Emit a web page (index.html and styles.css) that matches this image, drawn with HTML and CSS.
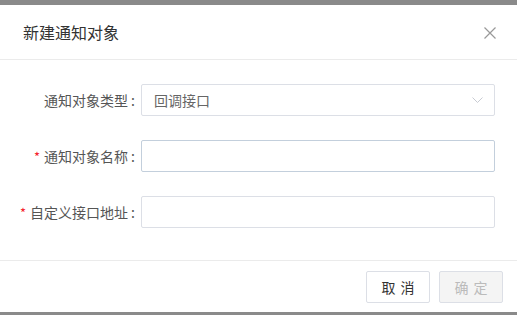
FILE: index.html
```html
<!DOCTYPE html>
<html lang="zh-CN">
<head>
    <meta charset="UTF-8">
    <title>新建通知对象</title>
    <link rel="stylesheet" href="styles.css">
</head>
<body>
    <div class="modal">
        <div class="modal-header">
            <span class="modal-title">新建通知对象</span>
            <svg class="close" width="12" height="12" viewBox="0 0 12 12">
                <path d="M0.5 0.5L11.5 11.5M11.5 0.5L0.5 11.5" stroke="#999" stroke-width="1.2" fill="none"/>
            </svg>
        </div>

        <div class="modal-body">
            <div class="form-row">
                <label class="form-label">通知对象类型<span class="colon">:</span></label>
                <div class="form-control select">
                    <span class="select-value">回调接口</span>
                    <svg class="arrow" width="11" height="6" viewBox="0 0 11 6">
                        <path d="M0.5 0.5L5.5 5.5L10.5 0.5" stroke="#c8cbd2" stroke-width="1" fill="none"/>
                    </svg>
                </div>
            </div>
            <div class="form-row">
                <label class="form-label"><i class="req">*</i>通知对象名称<span class="colon">:</span></label>
                <input class="form-control hover" type="text">
            </div>
            <div class="form-row">
                <label class="form-label"><i class="req">*</i>自定义接口地址<span class="colon">:</span></label>
                <input class="form-control" type="text">
            </div>
        </div>

        <div class="modal-footer">
            <button class="btn">取消</button>
            <button class="btn disabled">确定</button>
        </div>
    </div>
</body>
</html>
```

FILE: styles.css
```css
* {
    margin: 0;
    padding: 0;
    box-sizing: border-box;
}

body {
    font-family: "Noto Sans CJK SC", "Noto Sans", sans-serif;
    background: #8a8a8a;
    padding-top: 5px;
    height: 315px;
    overflow: hidden;
}

.modal {
    background: #fff;
    height: 307px;
    display: flex;
    flex-direction: column;
}

.modal-header {
    height: 55px;
    padding: 0 21px 0 23px;
    border-bottom: 1px solid #ebebeb;
    display: flex;
    align-items: center;
    justify-content: space-between;
}

.modal-title {
    font-size: 16px;
    color: #333;
    line-height: 1;
}

.close {
    margin-top: 1px;
}

.modal-body {
    height: 200px;
    padding: 24px 22px 0 0;
    display: flex;
    flex-direction: column;
    gap: 24px;
}

.form-row {
    display: flex;
    align-items: center;
    height: 32px;
}

.form-label {
    width: 141px;
    padding-right: 6px;
    text-align: right;
    font-size: 14px;
    color: #555;
    white-space: nowrap;
}

.colon {
    margin-left: 3px;
}

.req {
    font-style: normal;
    color: #f5222d;
    margin-right: 4px;
    font-size: 13px;
}

.form-control {
    flex: 1;
    height: 32px;
    border: 1px solid #dcdfe6;
    border-radius: 2px;
    background: #fff;
    font: inherit;
    outline: none;
}

.form-control.hover {
    border-color: #c3cfdc;
}

.select {
    display: flex;
    align-items: center;
    justify-content: space-between;
    padding: 0 11px 0 12px;
}

.select-value {
    font-size: 14px;
    color: #666;
}

.modal-footer {
    flex: 1;
    border-top: 1px solid #ebebeb;
    display: flex;
    justify-content: flex-end;
    align-items: flex-start;
    padding: 10px 14px 0 0;
    gap: 9px;
}

.btn {
    width: 64px;
    height: 32px;
    border: 1px solid #dcdfe6;
    border-radius: 2px;
    background: #fff;
    color: #333;
    font-family: inherit;
    font-size: 14px;
    letter-spacing: 5px;
    text-indent: 5px;
    cursor: pointer;
}

.btn.disabled {
    background: #f4f4f4;
    color: #bbb;
    cursor: not-allowed;
}
```
